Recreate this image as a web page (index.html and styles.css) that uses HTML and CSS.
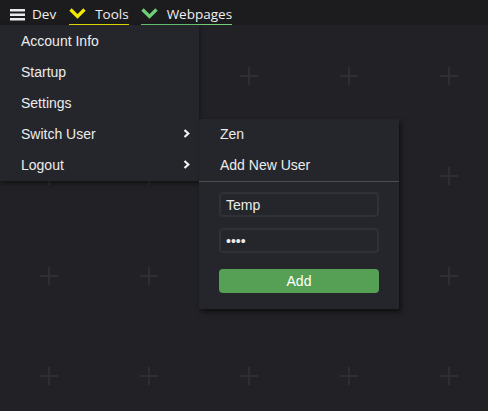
FILE: index.html
```html
<!DOCTYPE html>
<html>
<head>
<meta charset="utf-8">
<title>Dev menu</title>
<link rel="stylesheet" href="styles.css">
</head>
<body>
<header class="topbar">
  <div class="dev">
    <svg class="burger" width="15" height="13" viewBox="0 0 15 13"><rect x="0" y="1" width="15" height="2.5" fill="#ebebeb"/><rect x="0" y="5.5" width="15" height="2.5" fill="#ebebeb"/><rect x="0" y="10" width="15" height="2.5" fill="#ebebeb"/></svg>
    <span class="label">Dev</span>
    <nav class="menu">
      <div class="row">Account Info</div>
      <div class="row">Startup</div>
      <div class="row">Settings</div>
      <div class="row has-sub">
        <span>Switch User</span>
        <svg class="arrow" width="7" height="9" viewBox="0 0 7 9"><polyline points="1.5,1 5.3,4.5 1.5,8" fill="none" stroke="#f2f2f2" stroke-width="2.2"/></svg>
        <div class="submenu">
          <div class="row">Zen</div>
          <div class="row">Add New User</div>
          <form class="add-form">
            <input class="field" type="text" value="Temp">
            <input class="field" type="password" value="abcd">
            <button class="add-btn" type="button">Add</button>
          </form>
        </div>
      </div>
      <div class="row has-sub">
        <span>Logout</span>
        <svg class="arrow" width="7" height="9" viewBox="0 0 7 9"><polyline points="1.5,1 5.3,4.5 1.5,8" fill="none" stroke="#f2f2f2" stroke-width="2.2"/></svg>
      </div>
    </nav>
  </div>
  <div class="tab tab-tools">
    <svg class="chev" width="17" height="11" viewBox="0 0 17 11"><polyline points="1.5,1.5 8.5,8.5 15.5,1.5" fill="none" stroke="#f2ea00" stroke-width="3.2"/></svg>
    <span class="label">Tools</span>
  </div>
  <div class="tab tab-web">
    <svg class="chev" width="17" height="11" viewBox="0 0 17 11"><polyline points="1.5,1.5 8.5,8.5 15.5,1.5" fill="none" stroke="#6fcf76" stroke-width="3.2"/></svg>
    <span class="label">Webpages</span>
  </div>
</header>
</body>
</html>
```
FILE: styles.css
```css
html, body {
  margin: 0;
  padding: 0;
}
body {
  width: 488px;
  height: 411px;
  overflow: hidden;
  background-color: #222226;
  background-image: url("data:image/svg+xml,%3Csvg xmlns='http://www.w3.org/2000/svg' width='100' height='100'%3E%3Crect x='40' y='75' width='18' height='2' fill='%232e2e33'/%3E%3Crect x='48' y='67' width='2' height='18' fill='%232e2e33'/%3E%3C/svg%3E");
  background-size: 100px 100px;
  background-repeat: repeat;
  font-family: "Liberation Sans", Arial, sans-serif;
  color: #ececec;
}
.topbar {
  height: 25px;
  background: #1c1c1f;
  display: flex;
  align-items: flex-start;
  font-family: "Open Sans", "Noto Sans", sans-serif;
  font-size: 13.5px;
  color: #f0f0f0;
}
.dev {
  position: relative;
  display: flex;
  align-items: flex-start;
  height: 25px;
  padding-left: 10px;
}
.burger {
  margin-top: 8px;
  display: block;
}
.dev .label {
  margin-left: 7px;
  padding-top: 4px;
  line-height: 20px;
}
.tab {
  display: flex;
  align-items: flex-start;
  height: 24px;
  border-bottom: 1px solid;
}
.tab .label {
  padding-top: 4px;
  line-height: 20px;
}
.chev {
  display: block;
  margin-top: 8px;
  margin-right: 9px;
}
.tab-tools {
  margin-left: 13px;
  border-color: #f2ea00;
}
.tab-web {
  margin-left: 12px;
  border-color: #6fcf76;
}
.menu {
  position: absolute;
  top: 25px;
  left: 0;
  width: 199px;
  padding-top: 1px;
  background: #25262b;
  box-shadow: 0 2px 5px rgba(0, 0, 0, 0.55);
  font-family: "Liberation Sans", Arial, sans-serif;
  font-size: 14px;
  color: #ececec;
  z-index: 2;
}
.row {
  position: relative;
  height: 31px;
  box-sizing: border-box;
  padding: 0 9px 1px 21px;
  line-height: 30px;
  white-space: nowrap;
}
.has-sub {
  display: flex;
  justify-content: space-between;
  align-items: center;
}
.arrow {
  display: block;
  margin-top: -2px;
}
.submenu {
  position: absolute;
  left: 100%;
  top: 0;
  width: 200px;
  background: #25262b;
  box-shadow: 2px 3px 5px rgba(0, 0, 0, 0.55);
  line-height: normal;
}
.add-form {
  border-top: 1px solid #4b4b52;
  padding: 10px 20px 16px;
  display: flex;
  flex-direction: column;
}
.field {
  box-sizing: border-box;
  width: 160px;
  height: 25px;
  margin: 0 0 11px;
  padding: 0 5px;
  border: 2px solid #303137;
  border-radius: 4px;
  background: #25262b;
  color: #ececec;
  font-family: "Liberation Sans", Arial, sans-serif;
  font-size: 14px;
  outline: none;
}
.field + .field {
  margin-bottom: 16px;
}
.add-btn {
  width: 160px;
  height: 24px;
  padding: 0;
  border: none;
  border-radius: 4px;
  background: #55a055;
  color: #ffffff;
  font-family: "Liberation Sans", Arial, sans-serif;
  font-size: 14px;
}
```
